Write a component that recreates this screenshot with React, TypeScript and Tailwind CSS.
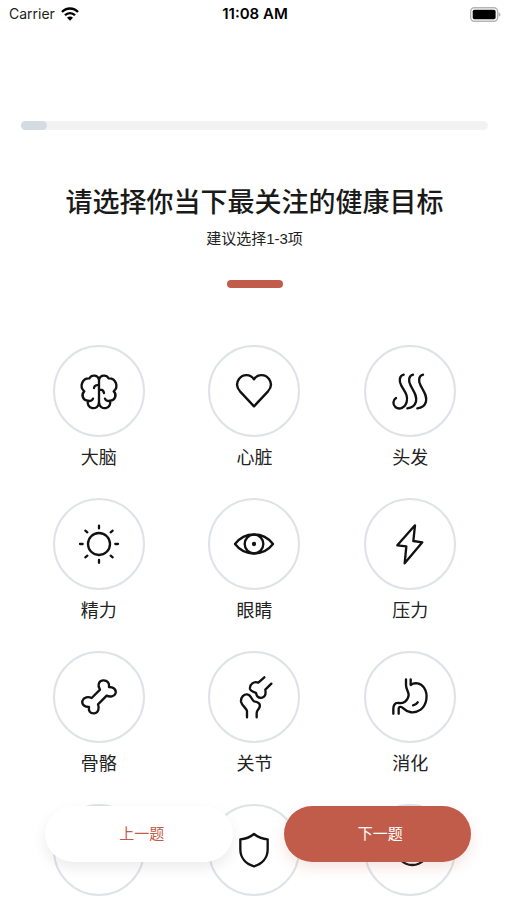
import { useState, type ReactNode } from 'react';

interface Goal {
  id: string;
  label: string;
  icon: ReactNode;
}

const goals: Goal[] = [
  {
    id: 'brain',
    label: '大脑',
    icon: (
      <>
        <path d="M72 36A16 16 0 0 0 43 34A22 22 0 0 0 28 73A16 16 0 0 0 39 101A17 17 0 1 0 72 108M39 101C46 103 52 100 54 95" />
        <path d="M72 36A16 16 0 0 1 101 34A22 22 0 0 1 116 73A16 16 0 0 1 105 101A17 17 0 1 1 72 108M105 101C98 103 92 100 90 95" />
        <path d="M72 34V112M57 63C58 56 64 53 72 55M72 68C80 67 86 71 87 78" />
      </>
    ),
  },
  {
    id: 'heart',
    label: '心脏',
    icon: <path d="M72 37C61 20 38 21 27 36C17 50 22 64 30 73L72 118L114 73C122 64 127 50 117 36C106 21 83 20 72 37Z" />,
  },
  {
    id: 'hair',
    label: '头发',
    icon: (
      <>
        <path d="M53 23C40 26 38 42 46 56C56 74 67 84 62 105C58 122 40 130 28 120C20 112 20 100 30 93" />
        <path d="M81 23C68 26 66 42 74 56C84 74 94 88 90 104C86 118 78 123 64 124" />
        <path d="M111 23C98 26 96 42 104 56C114 74 124 88 120 104C116 118 108 123 94 124" />
      </>
    ),
  },
  {
    id: 'energy',
    label: '精力',
    icon: (
      <>
        <circle cx="72" cy="72" r="33" />
        <path d="M72 17V25M72 120V128M15 72H23M121 72H129M31 32L37 37M107 37L113 32M31 112L37 107M107 107L113 112" />
      </>
    ),
  },
  {
    id: 'eyes',
    label: '眼睛',
    icon: (
      <>
        <path d="M15 72C44 34 100 34 129 72C100 110 44 110 15 72Z" />
        <circle cx="72" cy="72" r="28" />
        <circle cx="72" cy="72" r="3" fill="currentColor" />
      </>
    ),
  },
  {
    id: 'stress',
    label: '压力',
    icon: <path d="M87 16L34 76L61 79L56 130L109 67L82 63Z" />,
  },
  {
    id: 'bones',
    label: '骨骼',
    icon: (
      <path d="M75 50C67 38 70 24 84 22C98 21 104 32 102 42C114 42 124 48 122 60C118 72 104 72 95 68L69 94C74 106 70 120 58 121C44 122 40 112 42 102C30 102 20 96 22 84C26 72 40 70 50 75Z" />
    ),
  },
  {
    id: 'joints',
    label: '关节',
    icon: (
      <>
        <path d="M103 13L85 29C72 23 58 34 60 48C62 57 72 55 78 60C80 70 86 76 96 74C108 71 108 62 106 50L124 32" />
        <path d="M51 133V114C48 104 36 98 33 86C32 72 42 63 52 64C64 66 64 80 72 85C84 86 92 92 89 102C86 110 79 112 80 122V133" />
      </>
    ),
  },
  {
    id: 'digestion',
    label: '消化',
    icon: (
      <>
        <path d="M60 19V36C60 48 68 56 68 66C66 86 50 92 38 90C26 88 22 98 22 108V122" />
        <path d="M74 19V36C86 27 104 30 114 44C128 66 122 96 104 110C84 124 64 118 52 106C46 100 38 100 38 108V122M81 97C86 96 92 93 95 88" />
      </>
    ),
  },
  {
    id: 'sleep',
    label: '睡眠',
    icon: <path d="M66 30A32 32 0 1 0 98 66A25 25 0 0 1 66 30Z" />,
  },
  {
    id: 'immunity',
    label: '免疫',
    icon: <path d="M72 24C60 34 46 39 31 40V70C31 96 48 114 72 121C96 114 113 96 113 70V40C98 39 84 34 72 24Z" />,
  },
  {
    id: 'skin',
    label: '皮肤',
    icon: <circle cx="79" cy="68" r="49" />,
  },
];

function StatusBar() {
  return (
    <div className="grid h-7 shrink-0 grid-cols-3 items-center pr-1.5 pl-[9px] font-['Inter',sans-serif] leading-5 text-black">
      <div className="flex items-center gap-1.5 text-[#222]">
        <span className="text-sm">Carrier</span>
        <svg viewBox="0 0 54 42" className="h-[14px] w-[18px]" fill="none" stroke="#000" strokeWidth="7">
          <path d="M3 15C16 1 38 1 51 15" />
          <path d="M12 25C20 16 34 16 42 25" />
          <path d="M27 41L18 32C23 27 31 27 36 32Z" fill="#000" stroke="none" />
        </svg>
      </div>
      <span className="text-center text-[15px] font-semibold">11:08 AM</span>
      <svg viewBox="0 0 92 44" className="h-[15px] w-[31px] justify-self-end">
        <rect x="2" y="2" width="80" height="40" rx="11" fill="#fff" stroke="#b5b5b5" strokeWidth="4" />
        <rect x="8" y="8" width="68" height="28" rx="5" fill="#000" />
        <path d="M85 15C92 18 92 26 85 29Z" fill="#b5b5b5" />
      </svg>
    </div>
  );
}

interface GoalOptionProps {
  goal: Goal;
  checked: boolean;
  onToggle: (id: string) => void;
}

function GoalOption({ goal, checked, onToggle }: GoalOptionProps) {
  return (
    <label className="flex cursor-pointer flex-col items-center gap-[9px]">
      <span className="grid place-items-center">
        <input
          type="checkbox"
          checked={checked}
          onChange={() => onToggle(goal.id)}
          className="col-start-1 row-start-1 size-23 cursor-pointer appearance-none rounded-full border-2 border-[#dfe3e8] bg-white checked:border-[#c25c4a]"
        />
        <svg
          viewBox="0 0 144 144"
          className="pointer-events-none col-start-1 row-start-1 size-12 text-[#111]"
          fill="none"
          stroke="currentColor"
          strokeWidth="7"
          strokeLinecap="round"
          strokeLinejoin="round"
        >
          {goal.icon}
        </svg>
      </span>
      <span className="text-lg leading-6">{goal.label}</span>
    </label>
  );
}

export default function App() {
  const [selected, setSelected] = useState<string[]>([]);

  const toggleGoal = (id: string) => {
    setSelected((prev) => (prev.includes(id) ? prev.filter((item) => item !== id) : [...prev, id]));
  };

  return (
    <div className="relative flex h-screen flex-col overflow-hidden bg-white font-['Liberation_Sans','Noto_Sans_CJK_SC',sans-serif] text-[#222]">
      <StatusBar />

      <main className="flex flex-1 flex-col overflow-y-auto pt-[93px] pr-[19px] pb-28 pl-[21px] [scrollbar-width:none]">
        {/* Progress */}
        <div
          role="progressbar"
          aria-label="答题进度"
          aria-valuenow={5}
          aria-valuemin={0}
          aria-valuemax={100}
          className="h-[9px] shrink-0 rounded-full bg-[#f2f2f2]"
        >
          <div className="h-full rounded-full bg-[#d5dbe3]" style={{ width: '5.5%' }} />
        </div>

        {/* Question */}
        <div className="mt-[55px] flex flex-col items-center text-center">
          <h1 className="text-[27px] leading-9 font-medium text-[#1a1a1a]">请选择你当下最关注的健康目标</h1>
          <p className="mt-2 text-[15px] leading-5">建议选择1-3项</p>
          <div className="mt-[31px] h-2 w-14 rounded-full bg-[#c25c4a]" />
        </div>

        {/* Goals */}
        <div className="mt-[57px] grid grid-cols-3 gap-y-7">
          {goals.map((goal) => (
            <GoalOption key={goal.id} goal={goal} checked={selected.includes(goal.id)} onToggle={toggleGoal} />
          ))}
        </div>
      </main>

      {/* Floating navigation */}
      <nav className="absolute inset-x-0 bottom-[38px] flex gap-[51px] pr-9 pl-[45px]">
        <button
          type="button"
          className="h-14 flex-1 rounded-full bg-white pl-1.5 text-[15px] text-[#c25c4a] shadow-[0_6px_14px_rgba(0,0,0,0.08)]"
        >
          上一题
        </button>
        <button
          type="button"
          className="h-14 flex-1 rounded-full bg-[#c25c4a] pl-1.5 text-[15px] text-white shadow-[0_6px_14px_rgba(194,92,74,0.16)]"
        >
          下一题
        </button>
      </nav>
    </div>
  );
}
